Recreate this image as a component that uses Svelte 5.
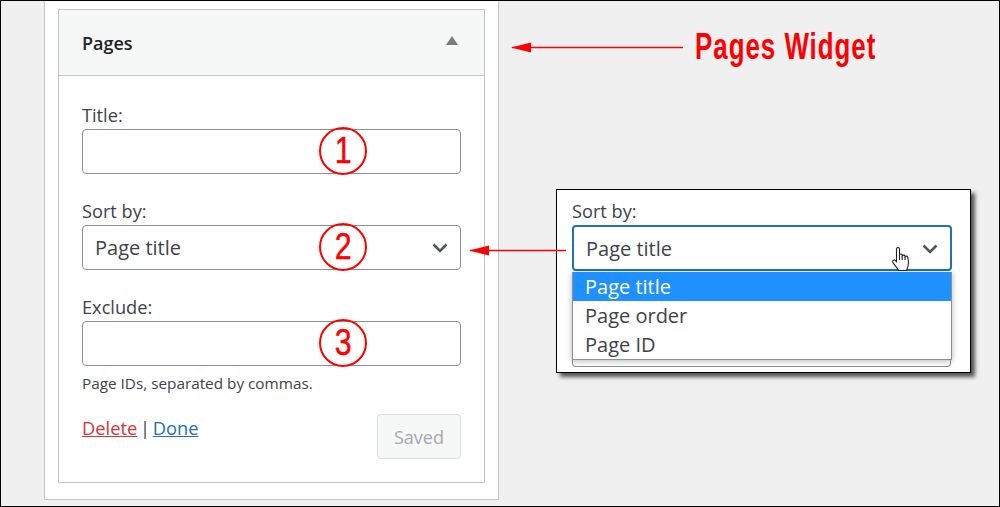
<script>
  const fields = [
    { label: "Title:", kind: "input", mark: "1" },
    { label: "Sort by:", kind: "select", mark: "2" },
    { label: "Exclude:", kind: "input", mark: "3" }
  ];
  const options = ["Page title", "Page order", "Page ID"];
</script>

{#snippet chevron()}
  <svg class="chevron" width="16" height="10" viewBox="0 0 16 10" fill="none" stroke="#50575e" stroke-width="2.6">
    <path d="M1.5 1.5 L8 8 L14.5 1.5" />
  </svg>
{/snippet}

<div class="page">
  <div class="sidebar">
    <section class="widget">
      <header class="widget-head">
        <h3>Pages</h3>
        <span class="toggle"></span>
      </header>
      <div class="widget-body">
        {#each fields as field}
          <div class="field">
            <label for={field.mark}>{field.label}</label>
            <div class="control" class:select={field.kind === "select"}>
              {#if field.kind === "select"}
                <span class="value">Page title</span>
                {@render chevron()}
              {/if}
              <span class="mark"><span class="digit">{field.mark}</span></span>
            </div>
          </div>
        {/each}
        <p class="hint">Page IDs, separated by commas.</p>
        <div class="actions">
          <div class="links">
            <a href="#delete" class="delete">Delete</a>
            <span class="sep">|</span>
            <a href="#done" class="done">Done</a>
          </div>
          <button class="saved" disabled>Saved</button>
        </div>
      </div>
    </section>
  </div>

  <div class="caption">Pages Widget</div>

  <div class="callout">
    <div class="callout-label">Sort by:</div>
    <div class="callout-select">
      <span class="value">Page title</span>
      {@render chevron()}
      <svg class="hand" width="18" height="24" viewBox="0 0 18 24" stroke="#222" stroke-width="1.1" fill="#fff" stroke-linejoin="round">
        <path d="M4.5 2 C4.5 0 7.5 0 7.5 2 V8 C7.5 6.6 10.2 6.6 10.2 8 V9 C10.2 7.8 13 7.8 13 9 V10 C13 8.8 15.8 8.8 15.8 10.5 L16.5 15 C16.5 19 15.5 21 14.5 23.5 H6.5 C5.5 21 3 19 1 15.5 C0 13.5 2.2 12 3.5 13.5 L4.5 15 Z" />
        <path d="M7.5 8 V13 M10.2 9 V13 M13 10 V13" fill="none" />
      </svg>
    </div>
    <ul class="options">
      {#each options as option, i}
        <li class:active={i === 0}>{option}</li>
      {/each}
    </ul>
    <div class="under"></div>
  </div>

  <svg class="arrows" width="1000" height="507" viewBox="0 0 1000 507">
    <path d="M512 47.5 H683" stroke="#f00" stroke-width="1.5" />
    <path d="M511 47.5 L531 42.5 V52.5 Z" fill="#f00" />
    <path d="M470 250.5 H566" stroke="#f00" stroke-width="1.5" />
    <path d="M469 250.5 L489 245.5 V255.5 Z" fill="#f00" />
  </svg>
</div>

<style>
  :global(body) {
    margin: 0;
  }

  .page {
    position: relative;
    box-sizing: border-box;
    width: 1000px;
    height: 507px;
    padding-left: 43px;
    overflow: hidden;
    background: #f0f0f0;
    border: 1px solid #000;
    font-family: "Open Sans", "Noto Sans", sans-serif;
    color: #3c434a;
  }

  .sidebar {
    box-sizing: border-box;
    width: 455px;
    height: 499px;
    padding: 8px 13px 0;
    background: #fff;
    border: 1px solid #c3c4c7;
    border-top: 0;
  }

  .widget {
    border: 1px solid #c3c4c7;
    height: 474px;
    box-sizing: border-box;
  }

  .widget-head {
    display: flex;
    align-items: center;
    justify-content: space-between;
    height: 66px;
    padding: 0 26px 0 23px;
    box-sizing: border-box;
    background: #f6f7f7;
    border-bottom: 1px solid #c3c4c7;
  }

  h3 {
    margin: 0;
    font-size: 18px;
    font-weight: 600;
    color: #1d2327;
  }

  .toggle {
    width: 0;
    height: 0;
    border-left: 6px solid transparent;
    border-right: 6px solid transparent;
    border-bottom: 9px solid #787c82;
    margin-bottom: 4px;
  }

  .widget-body {
    padding: 28px 23px 0;
  }

  .field {
    margin-bottom: 26px;
  }

  .field:nth-child(3) {
    margin-bottom: 7px;
  }

  label {
    display: block;
    height: 25px;
    font-size: 18.2px;
    line-height: 22px;
  }

  .control {
    position: relative;
    box-sizing: border-box;
    display: flex;
    align-items: center;
    height: 45px;
    padding: 0 12px;
    background: #fff;
    border: 1px solid #8c8f94;
    border-radius: 4px;
  }

  .value {
    font-size: 20px;
    flex: 1;
  }

  .mark {
    position: absolute;
    left: 236px;
    top: -3px;
    box-sizing: border-box;
    width: 48px;
    height: 48px;
    border: 2px solid #f00;
    border-radius: 50%;
    color: #f00;
    font-family: "Liberation Sans", sans-serif;
    font-size: 37px;
    line-height: 44px;
    text-align: center;
  }

  .digit {
    display: inline-block;
    transform: scaleX(0.82);
    -webkit-text-stroke: 0.5px #f00;
  }

  .chevron {
    display: block;
  }

  .hint {
    margin: 0;
    font-size: 15.3px;
    line-height: 20px;
  }

  .actions {
    display: flex;
    justify-content: space-between;
    margin-top: 21px;
  }

  .links {
    font-size: 18.3px;
    line-height: 28px;
  }

  .sep {
    margin: 0 -2px;
  }

  .delete {
    color: #d63638;
  }

  .done {
    color: #2271b1;
  }

  .saved {
    box-sizing: border-box;
    width: 84px;
    height: 45px;
    padding-top: 2px;
    background: #f6f7f7;
    border: 1px solid #dcdcde;
    border-radius: 4px;
    color: #a7aaad;
    font: inherit;
    font-size: 18px;
  }

  .arrows {
    position: absolute;
    left: -1px;
    top: -1px;
    pointer-events: none;
  }

  .caption {
    position: absolute;
    left: 694px;
    top: 24px;
    color: #f00;
    font-family: "Liberation Sans", sans-serif;
    font-size: 37px;
    line-height: 44px;
    font-weight: 700;
    letter-spacing: 1.4px;
    white-space: nowrap;
    transform: scaleX(0.7);
    transform-origin: left center;
  }

  .callout {
    position: absolute;
    left: 555px;
    top: 188px;
    box-sizing: border-box;
    width: 415px;
    height: 184px;
    padding: 10px 18px 0 15px;
    background: #fff;
    border: 1px solid #000;
    box-shadow: 4px 4px 4px rgba(0, 0, 0, 0.65);
  }

  .callout-label {
    height: 25px;
    font-size: 18.2px;
    line-height: 22px;
  }

  .callout-select {
    position: relative;
    box-sizing: border-box;
    display: flex;
    align-items: center;
    height: 46px;
    padding: 1px 12px 0;
    border: 2px solid #2271b1;
    border-radius: 4px;
  }

  .hand {
    position: absolute;
    left: 318px;
    top: 20px;
  }

  .options {
    position: relative;
    z-index: 1;
    box-sizing: border-box;
    margin: 1px 0 0;
    padding: 0;
    list-style: none;
    background: #fff;
    border: 1px solid #8c8f94;
    border-top: 0;
    box-shadow: 0 1px 6px rgba(0, 0, 0, 0.3);
  }

  li {
    height: 29px;
    padding-left: 12px;
    font-size: 20px;
    line-height: 29px;
  }

  li.active {
    background: #1e90ff;
    color: #fff;
  }

  .under {
    box-sizing: border-box;
    height: 7px;
    margin-right: 1px;
    border: 1px solid #8c8f94;
    border-top: 0;
    border-radius: 0 0 4px 4px;
  }
</style>
